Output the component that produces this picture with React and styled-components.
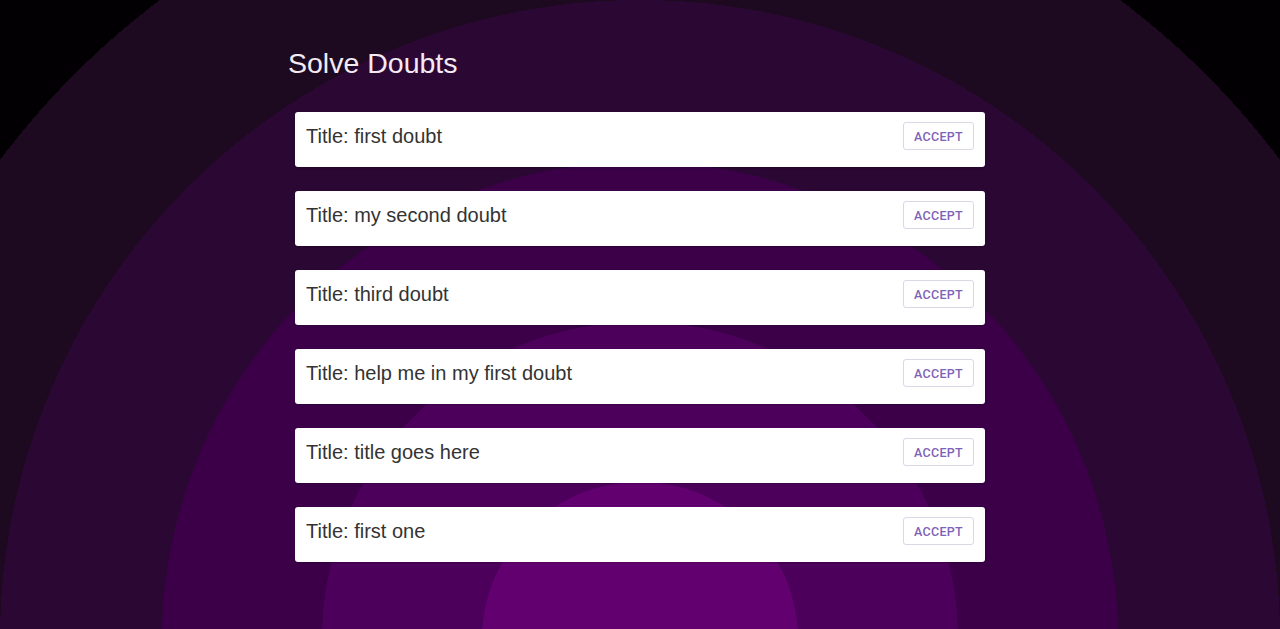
import React from "react";
import styled, { createGlobalStyle } from "styled-components";

const GlobalStyle = createGlobalStyle`
  html, body {
    margin: 0;
    padding: 0;
  }
  body {
    min-height: 100vh;
    font-family: "Liberation Sans", Arial, sans-serif;
    background-color: #000;
    background-image: radial-gradient(
      circle at 50% 640px,
      #62006f 0 158px,
      #4c005b 158px 318px,
      #3b0048 318px 478px,
      #2b0734 478px 640px,
      #1e0a20 640px 800px,
      #030003 800px
    );
    background-repeat: no-repeat;
  }
`;

const Page = styled.main`
  width: 704px;
  margin: 0 auto;
  padding-top: 47px;
  box-sizing: border-box;
`;

const Heading = styled.h1`
  margin: 0 0 33px;
  color: #f4eaf4;
  font-size: 28.5px;
  font-weight: normal;
  line-height: 32px;
`;

const List = styled.div`
  display: flex;
  flex-direction: column;
  gap: 24px;
  padding: 0 7px;
`;

const Card = styled.div`
  display: flex;
  align-items: flex-start;
  justify-content: space-between;
  height: 55px;
  box-sizing: border-box;
  padding: 10px 11px 0 11px;
  background: #fff;
  border-radius: 3px;
  box-shadow: 0 1px 2px rgba(0, 0, 0, 0.2);
`;

const Title = styled.span`
  margin-top: 3px;
  color: #333;
  font-size: 20px;
  line-height: 23px;
`;

const AcceptButton = styled.button`
  height: 28px;
  width: 71px;
  padding: 0;
  background: #fff;
  border: 1px solid #dcd6e6;
  border-radius: 3px;
  color: #7e62b9;
  font-family: Roboto, "Liberation Sans", sans-serif;
  font-size: 12.5px;
  font-weight: 500;
  letter-spacing: 0.3px;
  text-transform: uppercase;
  cursor: pointer;
`;

const doubts = [
  "first doubt",
  "my second doubt",
  "third doubt",
  "help me in my first doubt",
  "title goes here",
  "first one",
];

const App = () => {
  return (
    <>
      <GlobalStyle />
      <Page>
        <Heading>Solve Doubts</Heading>
        <List>
          {doubts.map((title) => (
            <Card key={title}>
              <Title>Title: {title}</Title>
              <AcceptButton type="button">Accept</AcceptButton>
            </Card>
          ))}
        </List>
      </Page>
    </>
  );
};

export default App;
